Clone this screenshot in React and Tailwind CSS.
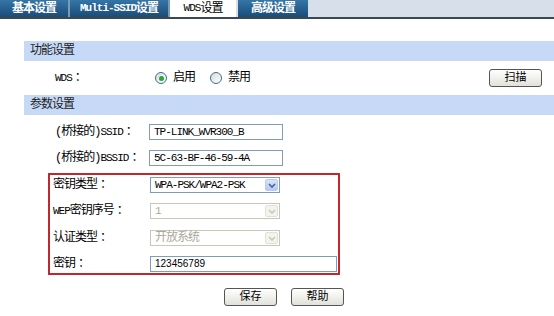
import React from "react";

// Latin runs are set a bit smaller than the CJK ones, like the SimSun half-width glyphs
const L = ({ children }) => <span className="text-[11px]">{children}</span>;
// full-width colon, centred as in SimSun
const C = () => <span className="ml-[3px]">：</span>;

const Chevron = ({ disabled }) => (
    <svg width="8" height="5" viewBox="0 0 8 5">
        <path d="M1 1 L4 4 L7 1" fill="none" stroke={disabled ? "#c9c7ba" : "#4d6185"} strokeWidth="1.6" />
    </svg>
);

function Select({ children, disabled }) {
    return (
        <div
            className={
                disabled
                    ? "w-[130px] h-[16px] border border-[#c9c7ba] bg-white flex items-center"
                    : "w-[130px] h-[16px] border border-[#7f9db9] bg-white flex items-center"
            }
        >
            <span className={disabled ? "flex-1 pl-[4px] text-[#aca899]" : "flex-1 pl-[4px]"}>{children}</span>
            <span
                className={
                    disabled
                        ? "w-[13px] h-[12px] mr-[1px] rounded-[2px] bg-[#f4f3ee] border border-[#e2e0d6] flex items-center justify-center"
                        : "w-[13px] h-[12px] mr-[1px] rounded-[2px] bg-gradient-to-b from-[#d6e2fd] to-[#b4c8f6] border border-[#b9cbf3] flex items-center justify-center"
                }
            >
                <Chevron disabled={disabled} />
            </span>
        </div>
    );
}

function Radio({ checked }) {
    return (
        <span className="w-[12px] h-[12px] rounded-full border border-[#3a6ea5] bg-gradient-to-br from-[#dcdcd4] to-white flex items-center justify-center">
            {checked && <span className="w-[5px] h-[5px] rounded-full bg-[#2ca53b]" />}
        </span>
    );
}

function Button({ children }) {
    return (
        <button className="w-[53px] h-[18px] rounded-[3px] border border-[#555] bg-gradient-to-b from-white to-[#e2e2da] flex items-center justify-center tracking-normal text-[11px]">
            {children}
        </button>
    );
}

function Input({ children, wide }) {
    return (
        <div
            className={
                wide
                    ? "w-[187px] h-[16px] border border-[#7f9db9] pl-[4px] flex items-center"
                    : "w-[134px] h-[16px] border border-[#7f9db9] pl-[4px] flex items-center"
            }
        >
            {children}
        </div>
    );
}

export default function App() {
    return (
        <div className="w-[554px] h-[316px] bg-white overflow-hidden text-[12px] leading-none tracking-[-1px] text-black font-['Liberation_Mono','Noto_Sans_CJK_SC',monospace]">
            {/* tabs */}
            <div className="flex h-[19px] bg-[#d6dfea] border-b-2 border-[#3a4754]">
                <div className="w-[68px] flex items-center justify-center text-white font-bold bg-gradient-to-b from-[#3576a8] to-[#1b4c78]">基本设置</div>
                <div className="w-[2px] bg-[#7d9ab4]" />
                <div className="w-[98px] flex items-center justify-center text-white font-bold bg-gradient-to-b from-[#3576a8] to-[#1b4c78]">
                    <L>Multi-SSID</L>设置
                </div>
                <div className="w-[2px] bg-[#7d9ab4]" />
                <div className="w-[66px] flex items-center justify-center bg-white">
                    <L>WDS</L>设置
                </div>
                <div className="w-[2px] bg-[#d6dfea]" />
                <div className="w-[70px] flex items-center justify-center text-white font-bold bg-gradient-to-b from-[#3576a8] to-[#1b4c78]">高级设置</div>
            </div>

            <div className="pl-[24px] pt-[22px]">
                <div className="h-[20px] bg-[#c6daf7] pl-[6px] flex items-center text-[#222]">功能设置</div>

                <div className="h-[34px] flex items-center">
                    <span className="ml-[31px] w-[94px]"><L>WDS</L><C /></span>
                    <span className="ml-[6px]"><Radio checked /></span>
                    <span className="ml-[6px]">启用</span>
                    <span className="ml-[15px]"><Radio /></span>
                    <span className="ml-[6px]">禁用</span>
                    <span className="ml-auto mr-[12px]"><Button>扫描</Button></span>
                </div>

                <div className="h-[20px] bg-[#c6daf7] pl-[6px] flex items-center text-[#222]">参数设置</div>

                <div className="mt-[9px] h-[16px] flex items-center">
                    <span className="ml-[31px] w-[94px]">(桥接的)<L>SSID</L><C /></span>
                    <Input><L>TP-LINK_WVR300_B</L></Input>
                </div>
                <div className="mt-[10px] h-[16px] flex items-center">
                    <span className="ml-[31px] w-[94px]">(桥接的)<L>BSSID</L><C /></span>
                    <Input><L>5C-63-BF-46-59-4A</L></Input>
                </div>

                <div className="mt-[7px] ml-[24px] w-[292px] h-[102px] border-2 border-[#c1272d] pl-[3px] pt-[2px]">
                    <div className="h-[16px] flex items-center">
                        <span className="w-[97px]">密钥类型<C /></span>
                        <Select><L>WPA-PSK/WPA2-PSK</L></Select>
                    </div>
                    <div className="mt-[10px] h-[16px] flex items-center">
                        <span className="w-[97px]"><L>WEP</L>密钥序号<C /></span>
                        <Select disabled><L>1</L></Select>
                    </div>
                    <div className="mt-[11px] h-[16px] flex items-center">
                        <span className="w-[97px]">认证类型<C /></span>
                        <Select disabled>开放系统</Select>
                    </div>
                    <div className="mt-[10px] h-[16px] flex items-center">
                        <span className="w-[97px]">密钥<C /></span>
                        <Input wide>
                            <span className="tracking-normal text-[10px] font-['Liberation_Sans',sans-serif]">123456789</span>
                        </Input>
                    </div>
                </div>

                <div className="mt-[13px] pl-[200px] flex gap-[14px]">
                    <Button>保存</Button>
                    <Button>帮助</Button>
                </div>
            </div>
        </div>
    );
}
